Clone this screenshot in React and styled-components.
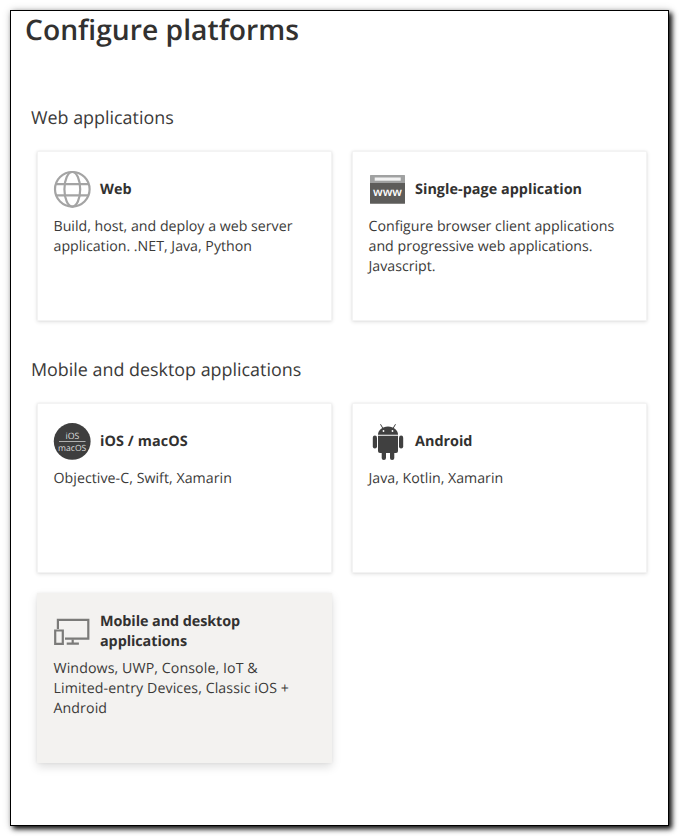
import React from "react";
import styled, { createGlobalStyle } from "styled-components";

const GlobalStyle = createGlobalStyle`
  * { box-sizing: border-box; }
  body {
    margin: 0;
    background: #fff;
    color: #323130;
    font-family: "Open Sans", "Noto Sans", sans-serif;
    text-rendering: geometricPrecision;
  }
`;

const Page = styled.div`
  height: 837px;
  padding: 10px 11px 11px 10px;
  overflow: hidden;
`;

const Panel = styled.main`
  height: 816px;
  padding: 0 20px 0 14px;
  border: 1px solid #000;
  background: #fff;
  box-shadow: 3px 3px 5px rgba(0, 0, 0, 0.92), 1px 1px 8px rgba(0, 0, 0, 0.25);
`;

const Title = styled.h1`
  margin: 0;
  padding-top: 1px;
  font-size: 28.25px;
  font-weight: 600;
  line-height: 36px;
`;

const Section = styled.section`
  padding: ${(p) => (p.$first ? "57px" : "36px")} 0 0 6px;
`;

const SectionTitle = styled.h2`
  margin: 0;
  color: #3b3a39;
  font-size: 17.9px;
  font-weight: 400;
  line-height: 26px;
`;

const CardGrid = styled.div`
  display: grid;
  grid-template-columns: 295px 295px;
  grid-auto-rows: 170px;
  gap: 20px;
  padding: 20px 0 0 6px;
`;

const Card = styled.article`
  padding: 19px 28px 0 16px;
  background: ${(p) => (p.$active ? "#f3f2f0" : "#fff")};
  box-shadow: ${(p) =>
    p.$active
      ? "0 4px 9px rgba(0, 0, 0, 0.13), 0 0 3px rgba(0, 0, 0, 0.06)"
      : "inset 0 0 0 1px #f3f3f3, 0 1px 4px rgba(0, 0, 0, 0.12), 0 0 2px rgba(0, 0, 0, 0.05)"};
`;

const CardHeader = styled.header`
  display: flex;
  align-items: center;
  gap: 9px;
  height: 40px;
`;

const Icon = styled.svg`
  flex: none;
  width: 38px;
  height: 38px;
  margin-bottom: 2px;
`;

const CardTitle = styled.h3`
  margin: 0;
  font-size: 14.4px;
  font-weight: 700;
  line-height: 20px;
  letter-spacing: ${(p) => p.$tracking || 0}px;
  white-space: pre-line;
`;

const CardText = styled.p`
  margin: 7px 0 0 0.5px;
  color: #3b3a39;
  font-size: 14.2px;
  line-height: 20px;
  letter-spacing: ${(p) => p.$tracking || 0}px;
  white-space: pre;
`;

const IconLabel = styled.text`
  font-family: "Open Sans", sans-serif;
  font-size: ${(p) => p.$size}px;
  font-weight: ${(p) => p.$weight || 400};
  text-anchor: middle;
  fill: ${(p) => p.$fill || "#fff"};
`;

const GlobeIcon = () => (
  <Icon viewBox="0 0 38 38" fill="none" stroke="#a4a4a4" strokeWidth="2.2">
    <circle cx="19.3" cy="19.3" r="17.3" />
    <ellipse cx="19.3" cy="19.3" rx="7.9" ry="17.3" />
    <path d="M3 14.1h32.6M3 25.3h32.6" />
  </Icon>
);

const BrowserIcon = () => (
  <Icon viewBox="0 0 38 38">
    <path fill="#a0a1a1" d="M2 5.6q0-.6.6-.6h33.8q.6 0 .6.6V13H2z" />
    <path fill="#5d5c5a" d="M2 13h35v20.2q0 .6-.6.6H2.6q-.6 0-.6-.6z" />
    <path fill="#f2f2f2" d="M6.7 7.5h26v3.2h-26z" />
    <IconLabel x="19.5" y="25.6" $size={11.8} $weight={600}>www</IconLabel>
  </Icon>
);

const AppleIcon = () => (
  <Icon viewBox="0 0 38 38">
    <circle cx="19.2" cy="19.4" r="18.4" fill="#3e3e3e" />
    <path stroke="#b0b0b0" d="M6 19.5h26.5" />
    <IconLabel x="19.5" y="16.8" $size={8.8} $fill="#dcdcdc">iOS</IconLabel>
    <IconLabel x="19.2" y="28.6" $size={8.6} $fill="#dcdcdc">macOS</IconLabel>
  </Icon>
);

const AndroidIcon = () => (
  <Icon viewBox="0 0 38 38" fill="#404040">
    <path d="M10 12.7C10 8.2 14.2 4.5 20 4.5s10 3.7 10 8.2z" />
    <path stroke="#404040" strokeWidth="1" strokeLinecap="round" d="M14.8 6.2l-2.1-3.6M25.2 6.2l2.1-3.6" />
    <circle cx="15.5" cy="9" r=".9" fill="#fff" />
    <circle cx="24.5" cy="9" r=".9" fill="#fff" />
    <path d="M10 13.8h20v15.200q0 2-2 2H12q-2 0-2-2z" />
    <rect x="4.8" y="13.6" width="4.2" height="13" rx="2.1" />
    <rect x="31" y="13.6" width="4.2" height="13" rx="2.1" />
    <rect x="13.7" y="28" width="4.3" height="10" rx="2.1" />
    <rect x="22" y="28" width="4.3" height="10" rx="2.1" />
  </Icon>
);

const DevicesIcon = () => (
  <Icon viewBox="0 0 38 38" fill="none" stroke="#7b7b79" strokeWidth="2.2">
    <path d="M4.9 17V7.9h30.4v18.7H12" />
    <path d="M2.2 18.5h7.6v13.3H2.2z" />
    <path d="M19.7 27.5v4M13.7 31.7h12.2" />
  </Icon>
);

const webPlatforms = [
  {
    title: "Web",
    icon: GlobeIcon,
    text: "Build, host, and deploy a web server\napplication. .NET, Java, Python",
  },
  {
    title: "Single-page application",
    icon: BrowserIcon,
    titleTracking: 0.03,
    text: "Configure browser client applications\nand progressive web applications.\nJavascript.",
  },
];

const nativePlatforms = [
  {
    title: "iOS / macOS",
    icon: AppleIcon,
    titleTracking: 0.08,
    text: "Objective-C, Swift, Xamarin",
    tracking: 0.04,
  },
  { title: "Android", icon: AndroidIcon, text: "Java, Kotlin, Xamarin" },
  {
    title: "Mobile and desktop\napplications",
    icon: DevicesIcon,
    titleTracking: -0.08,
    text: "Windows, UWP, Console, IoT &\nLimited-entry Devices, Classic iOS +\nAndroid",
    tracking: 0.09,
    active: true,
  },
];

const PlatformCard = ({ title, icon: PlatformIcon, text, titleTracking, tracking, active }) => (
  <Card $active={active}>
    <CardHeader>
      <PlatformIcon />
      <CardTitle $tracking={titleTracking}>{title}</CardTitle>
    </CardHeader>
    <CardText $tracking={tracking}>{text}</CardText>
  </Card>
);

const PlatformSection = ({ title, platforms, first }) => (
  <Section $first={first}>
    <SectionTitle>{title}</SectionTitle>
    <CardGrid>
      {platforms.map((p) => (
        <PlatformCard key={p.title} {...p} />
      ))}
    </CardGrid>
  </Section>
);

export default function App() {
  return (
    <Page>
      <GlobalStyle />
      <Panel>
        <Title>Configure platforms</Title>
        <PlatformSection first title="Web applications" platforms={webPlatforms} />
        <PlatformSection title="Mobile and desktop applications" platforms={nativePlatforms} />
      </Panel>
    </Page>
  );
}
